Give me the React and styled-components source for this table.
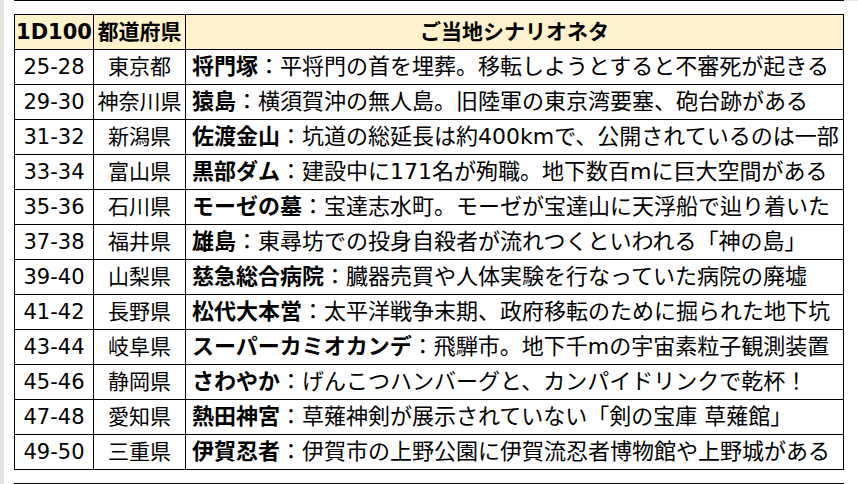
import styled, { createGlobalStyle } from "styled-components";

const GlobalStyle = createGlobalStyle`
  html, body {
    margin: 0;
    padding: 0;
    background: #ffffff;
  }
`;

const rows = [
  ["25-28", "東京都", "将門塚", "平将門の首を埋葬。移転しようとすると不審死が起きる"],
  ["29-30", "神奈川県", "猿島", "横須賀沖の無人島。旧陸軍の東京湾要塞、砲台跡がある"],
  ["31-32", "新潟県", "佐渡金山", "坑道の総延長は約400kmで、公開されているのは一部"],
  ["33-34", "富山県", "黒部ダム", "建設中に171名が殉職。地下数百mに巨大空間がある"],
  ["35-36", "石川県", "モーゼの墓", "宝達志水町。モーゼが宝達山に天浮船で辿り着いた"],
  ["37-38", "福井県", "雄島", "東尋坊での投身自殺者が流れつくといわれる「神の島」"],
  ["39-40", "山梨県", "慈急総合病院", "臓器売買や人体実験を行なっていた病院の廃墟"],
  ["41-42", "長野県", "松代大本営", "太平洋戦争末期、政府移転のために掘られた地下坑"],
  ["43-44", "岐阜県", "スーパーカミオカンデ", "飛騨市。地下千mの宇宙素粒子観測装置"],
  ["45-46", "静岡県", "さわやか", "げんこつハンバーグと、カンパイドリンクで乾杯！"],
  ["47-48", "愛知県", "熱田神宮", "草薙神剣が展示されていない「剣の宝庫 草薙館」"],
  ["49-50", "三重県", "伊賀忍者", "伊賀市の上野公園に伊賀流忍者博物館や上野城がある"],
];

function App() {
  return (
    <>
      <GlobalStyle />
      <Page>
        <Gutter />
        <Sheet>
          <TopRule />
          <Table>
            <colgroup>
              <col style={{ width: 79 }} />
              <col style={{ width: 92 }} />
              <col />
            </colgroup>
            <thead>
              <tr>
                <Head>1D100</Head>
                <Head>都道府県</Head>
                <Head>ご当地シナリオネタ</Head>
              </tr>
            </thead>
            <tbody>
              {rows.map(([roll, pref, spot, desc]) => (
                <tr key={roll}>
                  <Cell $center>{roll}</Cell>
                  <Cell $center>{pref}</Cell>
                  <Cell $wide>
                    <Spot>{spot}</Spot>：{desc}
                  </Cell>
                </tr>
              ))}
            </tbody>
          </Table>
          <BottomRule />
        </Sheet>
      </Page>
    </>
  );
}

export default App;

const Page = styled.div`
  display: flex;
  width: 858px;
  height: 484px;
  overflow: hidden;
  font-family: "DejaVu Sans", "Noto Sans CJK JP", sans-serif;
  color: #000;
`;
const Gutter = styled.div`
  width: 4px;
  background: #e3e3e3;
  flex: none;
`;
const Sheet = styled.div`
  flex: 1;
  display: flex;
  flex-direction: column;
  padding-left: 10px;
  padding-right: 15px;
`;
const TopRule = styled.div`
  height: 1px;
  background: #000;
  margin-bottom: 13px;
  box-shadow: 15px 0 0 #e3e3e3;
`;
const BottomRule = styled.div`
  height: 1px;
  background: #000;
  margin-top: 13px;
`;
const Table = styled.table`
  width: 830px;
  border-collapse: collapse;
  table-layout: fixed;
  font-size: 21px;
  line-height: 1;

  tr {
    height: 35px;
  }
`;
const Head = styled.th`
  background: #fff2cc;
  border: 1px solid #000;
  font-weight: bold;
  text-align: center;
  white-space: nowrap;
  padding: 0;
  overflow: hidden;
`;
const Cell = styled.td`
  border: 1px solid #000;
  font-size: ${(p) => (p.$wide ? "22px" : "21px")};
  text-align: ${(p) => (p.$center ? "center" : "left")};
  padding: ${(p) => (p.$center ? "0" : "0 0 0 6px")};
  white-space: nowrap;
  overflow: hidden;
`;
const Spot = styled.b`
  font-weight: bold;
`;
